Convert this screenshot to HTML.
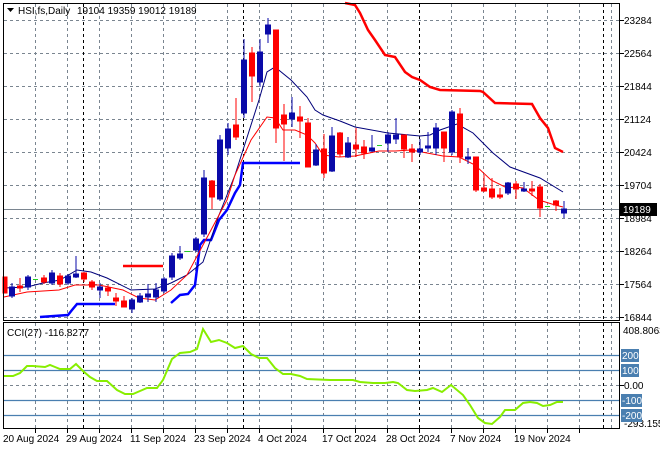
<!DOCTYPE html>
<html><head><meta charset="utf-8"><style>
html,body{margin:0;padding:0;background:#fff;}
svg{display:block;font-family:"Liberation Sans",Tahoma,sans-serif;font-size:10px;}
</style></head><body>
<svg width="660" height="450" viewBox="0 0 660 450" xmlns="http://www.w3.org/2000/svg">
<rect width="660" height="450" fill="#fff"/>
<g stroke="#7a8590" stroke-width="1" stroke-dasharray="3,3" fill="none">
<path d="M4 20.5H619M4 53.5H619M4 86.5H619M4 119.5H619M4 152.5H619M4 185.5H619M4 218.5H619M4 251.5H619M4 284.5H619M4 317.5H619"/>
<path d="M35.5 4V320M67.5 4V320M99.5 4V320M131.5 4V320M163.5 4V320M195.5 4V320M227.5 4V320M259.5 4V320M291.5 4V320M323.5 4V320M355.5 4V320M387.5 4V320M451.5 4V320M483.5 4V320M515.5 4V320M547.5 4V320M579.5 4V320M611.5 4V320"/>
<path d="M35.5 323V428M67.5 323V428M99.5 323V428M131.5 323V428M163.5 323V428M195.5 323V428M227.5 323V428M259.5 323V428M291.5 323V428M323.5 323V428M355.5 323V428M387.5 323V428M451.5 323V428M483.5 323V428M515.5 323V428M547.5 323V428M579.5 323V428M611.5 323V428"/>
<path d="M4 385.5H619"/>
</g>
<g stroke="#000" stroke-width="1" stroke-dasharray="3,3" fill="none">
<path d="M83.5 4V320M243.5 4V320M419.5 4V320M603.5 4V320M83.5 323V428M243.5 323V428M419.5 323V428M603.5 323V428"/>
</g>
<path d="M4 209.5H619" stroke="#7a8590" stroke-width="1"/>
<g stroke="#4a7fb0" stroke-width="1.2">
<path d="M4 355.5H619M4 370.5H619M4 400.5H619M4 415.5H619"/>
</g>
<polyline fill="none" stroke="#ff0000" stroke-width="2.5" points="345,3 355,5 360,13 368,30 375,40 385,55 395,57 405,72 412,77 420,80 430,87 440,90 480,91 483,92 495,103 532,104 540,118 548,128 555,148 563,152"/>
<polyline fill="none" stroke="#ff0000" stroke-width="2.5" points="123,266 163,266"/>
<polyline fill="none" stroke="#0000ff" stroke-width="2.5" points="40,317 68,315 72,310 77,304 115,304"/>
<polyline fill="none" stroke="#0000ff" stroke-width="2.5" points="171,303 180,295 188,294 195,285 200,245 204,240 211,240 219,220 227,210 235,193 240,185 243,163 300,163"/>
<polyline fill="none" stroke="#00007a" stroke-width="1" points="4,288 27,287 43,283 60,280 77,270 91,272 107,278 131,290 155,289 171,283 187,275 203,262 219,215 235,175 243,150 259,100 267,72 275,67 291,80 307,97 315,110 323,115 340,121 355,127 388,133 420,136 430,135 440,130 457,124 473,133 493,153 510,167 540,178 563,192"/>
<polyline fill="none" stroke="#ff0000" stroke-width="1" points="4,297 27,292 59,290 75,285 99,285 123,290 139,298 155,300 163,295 171,290 187,275 203,245 219,215 227,200 235,175 251,140 267,117 275,118 283,130 295,130 307,135 315,143 323,155 339,157 355,156 379,151 395,151 411,150 427,153 443,156 459,157 475,165 491,180 507,188 515,187 523,188 539,200 555,205 563,207"/>
<g stroke-width="1">
<g stroke="#0a0aa8" fill="#0a0aa8">
<path d="M12 283V298M28 275V290M52 270V285M68 274V285M76 256V278M100 283V298M132 298V313M140 293V303M148 284V302M156 283V302M164 277V293M172 253V280M180 246V260M196 237V252M204 170V237M220 135V201M228 123V155M244 39V118M260 39V87M268 18V43M292 97V127M316 144V166M332 127V172M348 137V158M372 135V152M388 132V152M396 118V144M420 139V155M428 132V152M436 123V155M452 110V155M468 148V164M508 182V195M524 182V192M564 201V218"/>
<rect x="9.5" y="287" width="5" height="9"/><rect x="25.5" y="277" width="5" height="10"/><rect x="49.5" y="273" width="5" height="10"/><rect x="65.5" y="276" width="5" height="7"/><rect x="73.5" y="274" width="5" height="3"/><rect x="97.5" y="287" width="5" height="3"/><rect x="129.5" y="300" width="5" height="9"/><rect x="137.5" y="296" width="5" height="6"/><rect x="145.5" y="294" width="5" height="3"/><rect x="153.5" y="290" width="5" height="7"/><rect x="161.5" y="279" width="5" height="12"/><rect x="169.5" y="256" width="5" height="21"/><rect x="177.5" y="254" width="5" height="4"/><rect x="193.5" y="239" width="5" height="11"/><rect x="201.5" y="178" width="5" height="56"/><rect x="217.5" y="140" width="5" height="59"/><rect x="225.5" y="129" width="5" height="19"/><rect x="241.5" y="60" width="5" height="53"/><rect x="257.5" y="52" width="5" height="30"/><rect x="265.5" y="25" width="5" height="9"/><rect x="289.5" y="113" width="5" height="6"/><rect x="313.5" y="150" width="5" height="15"/><rect x="329.5" y="136" width="5" height="35"/><rect x="345.5" y="143" width="5" height="14"/><rect x="369.5" y="148" width="5" height="3"/><rect x="385.5" y="135" width="5" height="8"/><rect x="393.5" y="135" width="5" height="4"/><rect x="417.5" y="149" width="5" height="3"/><rect x="425.5" y="146" width="5" height="2"/><rect x="433.5" y="128" width="5" height="20"/><rect x="449.5" y="112" width="5" height="40"/><rect x="465.5" y="157" width="5" height="2"/><rect x="505.5" y="183" width="5" height="10"/><rect x="521.5" y="189" width="5" height="2"/><rect x="561.5" y="209" width="5" height="4"/>
</g>
<g stroke="#ff0000" fill="#ff0000">
<path d="M20 278V292M44 275V284M60 273V287M84 272V282M92 280V290M108 285V296M116 293V306M124 296V307M212 180V209M236 98V140M252 47V102M276 30V143M284 104V161M300 106V138M308 118V167M324 134V178M340 132V157M356 128V157M364 140V159M404 135V158M412 144V162M444 132V162M460 108V163M476 157V192M484 175V192M492 178V199M500 188V199M516 181V199M532 181V196M540 184V217M556 200V211"/>
<rect x="3" y="277" width="4" height="16"/><rect x="17.5" y="286" width="5" height="2"/><rect x="41.5" y="278" width="5" height="4"/><rect x="57.5" y="276" width="5" height="8"/><rect x="81.5" y="273" width="5" height="6"/><rect x="89.5" y="282" width="5" height="5"/><rect x="105.5" y="288" width="5" height="3"/><rect x="113.5" y="298" width="5" height="3"/><rect x="121.5" y="301" width="5" height="6"/><rect x="209.5" y="181" width="5" height="16"/><rect x="233.5" y="125" width="5" height="12"/><rect x="249.5" y="53" width="5" height="23"/><rect x="273.5" y="30" width="5" height="98"/><rect x="281.5" y="115" width="5" height="9"/><rect x="297.5" y="117" width="5" height="4"/><rect x="305.5" y="123" width="5" height="44"/><rect x="321.5" y="149" width="5" height="24"/><rect x="337.5" y="133" width="5" height="21"/><rect x="353.5" y="145" width="5" height="4"/><rect x="361.5" y="147" width="5" height="6"/><rect x="401.5" y="135" width="5" height="14"/><rect x="409.5" y="149" width="5" height="3"/><rect x="441.5" y="132" width="5" height="16"/><rect x="457.5" y="114" width="5" height="43"/><rect x="473.5" y="157" width="5" height="33"/><rect x="481.5" y="188" width="5" height="3"/><rect x="489.5" y="189" width="5" height="8"/><rect x="497.5" y="195" width="5" height="2"/><rect x="513.5" y="184" width="5" height="5"/><rect x="529.5" y="189" width="5" height="2"/><rect x="537.5" y="187" width="5" height="21"/><rect x="553.5" y="201" width="5" height="4"/>
</g>
<g stroke="#22cc22"><path d="M33 279.5H38M185 251.5H190M377 145.5H382M545 206.5H550"/></g>
</g>
<polyline fill="none" stroke="#88ee00" stroke-width="2" points="4,376 13,376 20,373 27,366 33,366 45,367 50,365 55,367 60,369 70,369 76,364 83,371 90,377 97,381 107,381 117,390 125,394 133,394 140,391 147,388 157,388 163,380 172,359 180,353 190,352 197,349 203,329 211,342 219,340 227,343 235,348 243,346 251,354 259,358 267,358 275,368 283,374 291,374 300,376 307,379 330,380 353,380 360,382 373,383 385,383 393,382 398,383 407,390 415,391 427,390 433,388 442,392 451,385 463,395 470,405 478,418 485,423 492,424 500,417 505,410 515,410 523,403 530,402 537,403 543,406 550,405 557,402 563,402"/>
<g stroke="#000" fill="none" stroke-width="1">
<rect x="3.5" y="3.5" width="616" height="317"/>
<rect x="3.5" y="322.5" width="616" height="106"/>
</g>
<g stroke="#000"><path d="M620 20.5h4M620 53.5h4M620 86.5h4M620 119.5h4M620 152.5h4M620 185.5h4M620 218.5h4M620 251.5h4M620 284.5h4M620 317.5h4M620 385.5h4M35.5 429v4M67.5 429v4M99.5 429v4M131.5 429v4M163.5 429v4M195.5 429v4M227.5 429v4M259.5 429v4M291.5 429v4M323.5 429v4M355.5 429v4M387.5 429v4M419.5 429v4M451.5 429v4M483.5 429v4M515.5 429v4M547.5 429v4M579.5 429v4"/></g>
<g fill="#000">
<path d="M7 8h7l-3.5 4z"/>
<text x="18" y="14">HSI,fs,Daily</text>
<text x="77" y="14">19104 19359 19012 19189</text>
<text x="7" y="336">CCI(27) -116.8277</text>
<text x="624" y="24">23284</text><text x="624" y="57">22564</text><text x="624" y="90">21844</text><text x="624" y="123">21124</text><text x="624" y="156">20424</text><text x="624" y="189">19704</text><text x="624" y="222">18984</text><text x="624" y="255">18264</text><text x="624" y="288">17564</text><text x="624" y="321">16844</text>
<text x="623" y="334">408.8063</text><text x="624" y="389">0.00</text><text x="624" y="427">-293.1559</text>
<text x="3" y="442">20 Aug 2024</text><text x="66" y="442">29 Aug 2024</text><text x="130" y="442">11 Sep 2024</text><text x="194" y="442">23 Sep 2024</text><text x="258" y="442">4 Oct 2024</text><text x="322" y="442">17 Oct 2024</text><text x="386" y="442">28 Oct 2024</text><text x="450" y="442">7 Nov 2024</text><text x="514" y="442">19 Nov 2024</text>
</g>
<rect x="620" y="203" width="37" height="13" fill="#000"/>
<text x="623" y="213" fill="#fff">19189</text>
<g fill="#4a7fb0">
<rect x="621" y="349" width="18" height="13"/><rect x="621" y="364" width="18" height="13"/><rect x="621" y="394" width="21" height="13"/><rect x="621" y="409" width="21" height="13"/>
</g>
<g fill="#fff"><text x="622" y="359">200</text><text x="622" y="374">100</text><text x="622" y="404">-100</text><text x="622" y="419">-200</text></g>
</svg>
</body></html>
